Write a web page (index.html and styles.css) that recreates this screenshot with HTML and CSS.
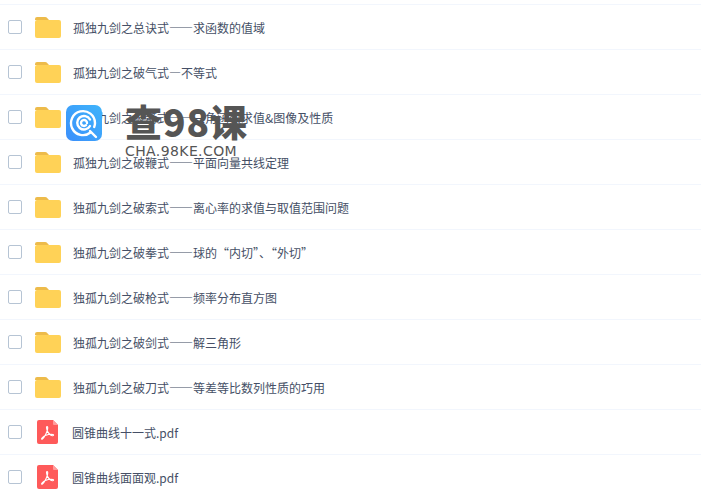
FILE: index.html
```html
<!DOCTYPE html>
<html lang="zh-CN">
<head>
    <meta charset="UTF-8">
    <title>文件列表</title>
    <link rel="stylesheet" href="styles.css">
</head>
<body>
    <svg class="defs" width="0" height="0">
        <symbol id="folder" viewBox="0 0 26 21">
            <path d="M0 2a2 2 0 0 1 2-2h8a3 3 0 0 1 2.400 1.200L14 3h-14z" fill="#edbb4b"/>
            <rect x="0" y="3" width="26" height="18" rx="2" fill="#ffd257"/>
        </symbol>
        <symbol id="pdf" viewBox="0 0 21 24">
            <path d="M2 0h14l5 5v17a2 2 0 0 1-2 2H2a2 2 0 0 1-2-2V2a2 2 0 0 1 2-2z" fill="#fe5a5a"/>
            <path d="M16 0l5 5h-4a1 1 0 0 1-1-1z" fill="#ff9c9c"/>
            <path d="M10 6.500c-.8 0-.6 2.500 .6 5 1 2 2.800 3.800 4.700 4.200 1.300 .2 1.700-.8 .7-1.200-1.900-.6-5 0-7.700 1.100-2.400 1-4.200 3-3.700 3.600 .6 .6 2.200-1.300 3.500-3.700 1.300-2.500 2.800-6.400 2.600-8.300-.1-.5-.4-.7-.7-.7z" fill="none" stroke="#fff" stroke-width="1.100"/>
        </symbol>
    </svg>

    <ul class="file-list">
        <li class="row">
            <span class="check"></span>
            <svg class="icon-folder"><use href="#folder"/></svg>
            <span class="name">孤独九剑之总诀式——求函数的值域</span>
        </li>
        <li class="row">
            <span class="check"></span>
            <svg class="icon-folder"><use href="#folder"/></svg>
            <span class="name">孤独九剑之破气式—不等式</span>
        </li>
        <li class="row">
            <span class="check"></span>
            <svg class="icon-folder"><use href="#folder"/></svg>
            <span class="name">孤独九剑之破箭式——三角函数求值&amp;图像及性质</span>
        </li>
        <li class="row">
            <span class="check"></span>
            <svg class="icon-folder"><use href="#folder"/></svg>
            <span class="name">孤独九剑之破鞭式——平面向量共线定理</span>
        </li>
        <li class="row">
            <span class="check"></span>
            <svg class="icon-folder"><use href="#folder"/></svg>
            <span class="name">独孤九剑之破索式——离心率的求值与取值范围问题</span>
        </li>
        <li class="row">
            <span class="check"></span>
            <svg class="icon-folder"><use href="#folder"/></svg>
            <span class="name">独孤九剑之破拳式——球的“内切”、“外切”</span>
        </li>
        <li class="row">
            <span class="check"></span>
            <svg class="icon-folder"><use href="#folder"/></svg>
            <span class="name">独孤九剑之破枪式——频率分布直方图</span>
        </li>
        <li class="row">
            <span class="check"></span>
            <svg class="icon-folder"><use href="#folder"/></svg>
            <span class="name">独孤九剑之破剑式——解三角形</span>
        </li>
        <li class="row">
            <span class="check"></span>
            <svg class="icon-folder"><use href="#folder"/></svg>
            <span class="name">独孤九剑之破刀式——等差等比数列性质的巧用</span>
        </li>
        <li class="row">
            <span class="check"></span>
            <svg class="icon-pdf"><use href="#pdf"/></svg>
            <span class="name">圆锥曲线十一式.pdf</span>
        </li>
        <li class="row">
            <span class="check"></span>
            <svg class="icon-pdf"><use href="#pdf"/></svg>
            <span class="name">圆锥曲线面面观.pdf</span>
        </li>
    </ul>

    <div class="watermark">
        <svg class="wm-logo" viewBox="0 0 36 36">
            <defs>
                <linearGradient id="wmBlue" x1="0" y1="1" x2="1" y2="0">
                    <stop offset="0" stop-color="#3b8ffb"/>
                    <stop offset="1" stop-color="#3fb4fb"/>
                </linearGradient>
            </defs>
            <rect width="36" height="36" rx="7" fill="url(#wmBlue)"/>
            <g fill="none" stroke="#fff" stroke-width="2.400" stroke-linecap="round">
                <path d="M24.500 27.500a12 12 0 1 1 4.500-9.500c0 1.500-.3 2.800-.8 4"/>
                <path d="M24 21a6.800 6.800 0 1 1 0-6.500"/>
                <path d="M21 18a3 3 0 1 0-1 2.200"/>
                <path d="M24 26l6 6"/>
            </g>
        </svg>
        <div class="wm-text">
            <div class="wm-title">查98课</div>
            <div class="wm-url">CHA.98KE.COM</div>
        </div>
    </div>
</body>
</html>
```

FILE: styles.css
```css
* {
    margin: 0;
    padding: 0;
    box-sizing: border-box;
}

html, body {
    height: 496px;
    overflow: hidden;
}

body {
    background: #fff;
    font-family: "Noto Sans CJK SC", "Noto Sans", sans-serif;
    position: relative;
}

.defs {
    position: absolute;
}

.file-list {
    list-style: none;
    padding-top: 4px;
    border-top: 0;
}

.row {
    height: 45px;
    display: flex;
    align-items: center;
    border-top: 1px solid #f2f6fd;
}

.check {
    width: 14px;
    height: 14px;
    margin-left: 8px;
    border: 1px solid #b6c4d4;
    border-radius: 2px;
    background: #fff;
    flex: none;
}

.icon-folder {
    width: 26px;
    height: 21px;
    margin-left: 13px;
    flex: none;
}

.icon-pdf {
    width: 21px;
    height: 24px;
    margin-left: 15px;
    margin-right: 2px;
    flex: none;
}

.name {
    margin-left: 12px;
    font-size: 12px;
    color: #454f66;
}

.watermark {
    position: absolute;
    left: 66px;
    top: 99px;
    display: flex;
    gap: 23px;
}

.wm-logo {
    width: 36px;
    height: 36px;
    margin-top: 6px;
    flex: none;
}

.wm-title {
    font-size: 37px;
    line-height: 44px;
    font-weight: 900;
    color: #555;
    letter-spacing: 1px;
}

.wm-url {
    font-family: "DejaVu Sans", sans-serif;
    font-size: 14px;
    line-height: 16px;
    color: #555;
    letter-spacing: .4px;
}
```
